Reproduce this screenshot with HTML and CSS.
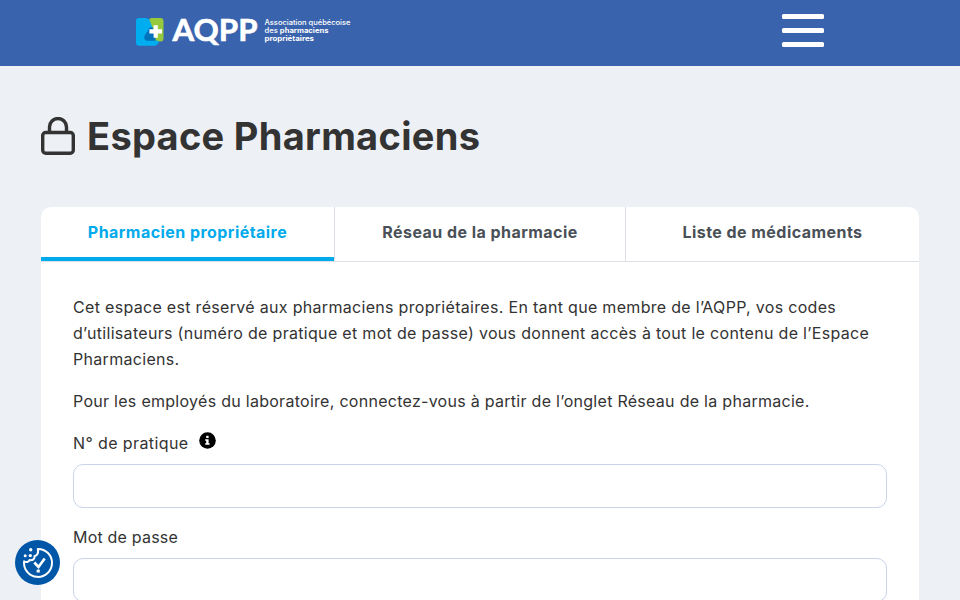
FILE: index.html
```html
<!DOCTYPE html>
<html lang="fr">
<head>
  <meta charset="UTF-8">
  <meta name="viewport" content="width=device-width, initial-scale=1">
  <title>Espace Pharmaciens</title>
  <link rel="stylesheet" href="styles.css">
</head>
<body>
  <header class="site-header">
    <a class="logo" href="#">
      <svg width="218" height="36" viewBox="0 0 218 36">
        <path fill="#97c93d" d="M16 1h8.500a3 3 0 0 1 3 3v17.500a3 3 0 0 1-3 3H17L13 12V4a3 3 0 0 1 3-3z"/>
        <path fill="#00aeef" d="M3 1h6.500c2 0 3.500 1 4.500 3l3 8-7 11 13 .7c-.5 3-2 5.100-5.500 5.100H3a3 3 0 0 1-3-3V4a3 3 0 0 1 3-3z"/>
        <path fill="#0072bc" d="M14 10L8.700 18.500C7.400 21.500 9 23.800 11.500 23.800H20l-3-13z"/>
        <path fill="#fff" d="M17.600 8.200h4.200v4.100H26v4.200h-4.200v4.200h-4.200v-4.200h-4.200v-4.200h4.200z"/>
        <text class="logo-name" x="36.500" y="23.500" textLength="85" lengthAdjust="spacingAndGlyphs">AQPP</text>
        <g class="logo-text">
          <text x="128.500" y="7.500" textLength="86" lengthAdjust="spacingAndGlyphs">Association québécoise</text>
          <text x="128.500" y="15.800" textLength="64" lengthAdjust="spacingAndGlyphs">des <tspan class="strong">pharmaciens</tspan></text>
          <text class="strong" x="128.500" y="24.100" textLength="49.500" lengthAdjust="spacingAndGlyphs">propriétaires</text>
        </g>
      </svg>
    </a>
    <button class="menu-toggle" aria-label="Menu">
      <span></span>
      <span></span>
      <span></span>
    </button>
  </header>

  <main class="page">
    <h1 class="page-title">
      <svg class="lock" width="34" height="38" viewBox="0 0 34 38">
        <rect x="1.700" y="15.500" width="30.600" height="20.800" rx="3"/>
        <path d="M8.500 15.500V10a8.500 8.500 0 0 1 17 0v5.500"/>
      </svg>
      <span>Espace Pharmaciens</span>
    </h1>

    <div class="card">
      <nav class="tabs">
        <a class="tab active" href="#"><span>Pharmacien propriétaire</span></a>
        <a class="tab" href="#"><span>Réseau de la pharmacie</span></a>
        <a class="tab" href="#"><span>Liste de médicaments</span></a>
      </nav>

      <form class="login">
        <p class="intro">Cet espace est réservé aux pharmaciens propriétaires. En tant que membre de l’AQPP, vos codes d’utilisateurs (numéro de pratique et mot de passe) vous donnent accès à tout le contenu de l’Espace Pharmaciens.</p>
        <p class="note">Pour les employés du laboratoire, connectez-vous à partir de l’onglet Réseau de la pharmacie.</p>

        <div class="field">
          <label class="label-number" for="pratique"><span>N° de pratique</span>
            <svg class="info" width="17" height="17" viewBox="0 0 17 17">
              <circle cx="8.500" cy="8.500" r="8.300"/>
              <path fill="#fff" d="M7.200 3.700h2.400V6H7.200zM6.200 7.200h3.400v4.100h1v1.500H6.200v-1.500h1V8.700h-1z"/>
            </svg>
          </label>
          <input type="text" id="pratique">
        </div>

        <div class="field">
          <label for="passe"><span>Mot de passe</span></label>
          <input type="password" id="passe">
        </div>
      </form>
    </div>
  </main>

  <button class="cookie-btn" aria-label="Témoins">
    <svg width="45" height="45" viewBox="0 0 45 45">
      <path class="line" d="M22.800 8.900A14 14 0 1 1 9.100 21.300c2.200 1.200 4.600.8 5.400-1.200 3.200.6 5.700-1.200 4.900-3.900 2.800-.9 4.300-3.700 3.400-7.300z"/>
      <path class="check" d="M19.300 22.500l4.200 4.500 6.200-8.500"/>
      <g fill="#fff">
        <rect x="21.600" y="29.500" width="3.200" height="3" rx=".5"/>
        <circle cx="15.700" cy="9.700" r="1.700"/>
        <circle cx="10.200" cy="15.700" r="1.500"/>
        <circle cx="15.300" cy="15.600" r="1.700"/>
      </g>
    </svg>
  </button>
</body>
</html>
```

FILE: styles.css
```css
* {
  box-sizing: border-box;
}

body {
  margin: 0;
  height: 600px;
  overflow: hidden;
  background: #edf0f5;
  color: #333;
  font-family: Inter, sans-serif;
  font-size: 16px;
  line-height: 26px;
}

.site-header {
  display: flex;
  justify-content: space-between;
  align-items: flex-start;
  height: 66px;
  padding: 14px 136px 0;
  background: #3a63ae;
}

.logo {
  padding-top: 3px;
}

.logo svg {
  display: block;
  overflow: visible;
}

.logo-name {
  fill: #fff;
  font-family: Lato, sans-serif;
  font-size: 30px;
  font-weight: 700;
  stroke: #fff;
  stroke-width: .6px;
}

.logo-text {
  fill: #fff;
  font-size: 7px;
  font-weight: 500;
}

.logo-text .strong {
  font-weight: 700;
}

.menu-toggle {
  display: flex;
  flex-direction: column;
  gap: 9px;
  width: 42px;
  padding: 0;
  border: 0;
  background: none;
}

.menu-toggle span {
  height: 5px;
  border-radius: 1.500px;
  background: #fff;
}

.page {
  padding: 49px 41px 0;
}

.page-title {
  display: flex;
  align-items: center;
  gap: 12px;
  height: 42px;
  margin: 0 0 50px;
  font-size: 38px;
  font-weight: 700;
  line-height: 42px;
  letter-spacing: .3px;
}

.lock {
  fill: none;
  stroke: #333;
  stroke-width: 3.400px;
}

.card {
  border-radius: 10px;
  background: #fff;
}

.tabs {
  display: grid;
  grid-template-columns: 294px 291px 1fr;
  height: 55px;
  border-bottom: 1px solid #dcdee8;
}

.tab {
  padding-top: 12px;
  border-right: 1px solid #dcdee8;
  color: #495057;
  font-weight: 700;
  letter-spacing: .450px;
  text-align: center;
  text-decoration: none;
}

.tab:last-child {
  border-right: 0;
}

.tab.active {
  position: relative;
  color: #00aaeb;
}

.tab.active::after {
  content: "";
  position: absolute;
  left: 0;
  right: 0;
  bottom: 0;
  height: 4px;
  background: #00aaeb;
}

.login {
  padding: 32px 32px 33px;
  letter-spacing: .2px;
}

.login p {
  margin: 0 0 16px;
}

.intro {
  letter-spacing: .310px;
}

.note {
  letter-spacing: .280px;
}

.field {
  margin-bottom: 16px;
}

label {
  display: flex;
  gap: 10px;
  height: 26px;
  margin-bottom: 8px;
}

.label-number {
  letter-spacing: .4px;
}

.info {
  margin-top: 2px;
}

input {
  display: block;
  width: 100%;
  height: 44px;
  border: 1px solid #c8d4e8;
  border-radius: 10px;
  background: #fff;
}

.cookie-btn {
  position: fixed;
  left: 15px;
  bottom: 15px;
  width: 45px;
  height: 45px;
  padding: 0;
  border: 0;
  border-radius: 50%;
  background: #0056a7;
}

.cookie-btn svg {
  display: block;
}

.cookie-btn .line {
  fill: none;
  stroke: #fff;
  stroke-width: 2px;
  stroke-linejoin: round;
}

.cookie-btn .check {
  fill: none;
  stroke: #fff;
  stroke-width: 2.600px;
}
```
